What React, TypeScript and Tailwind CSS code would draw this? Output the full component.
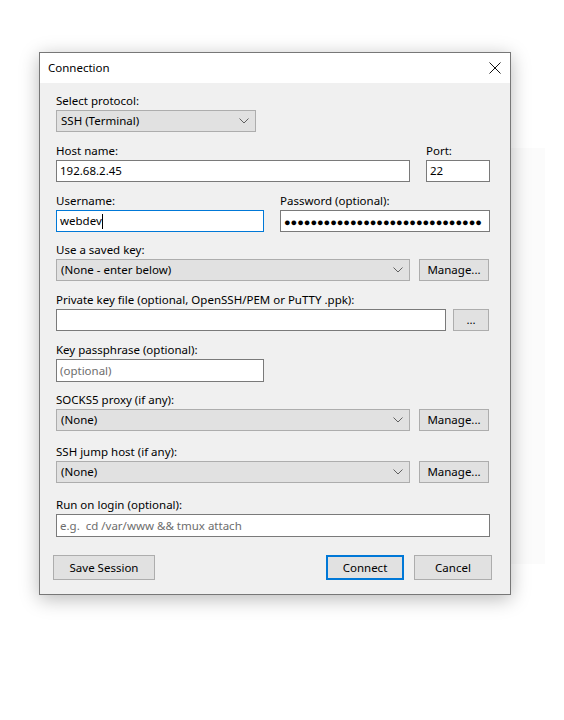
import React from 'react';

const font = { fontFamily: '"Noto Sans", "Liberation Sans", sans-serif' };

const Chevron = () => (
  <svg width="10" height="6" viewBox="0 0 10 6" className="shrink-0">
    <path d="M0.5 0.5 L5 5 L9.5 0.5" fill="none" stroke="#606060" strokeWidth="1" />
  </svg>
);

const Label = ({ children }: { children: React.ReactNode }) => (
  <div className="h-4 leading-4 mb-px text-[11.5px] text-black whitespace-nowrap">{children}</div>
);

const Select = ({ value, className }: { value: string; className: string }) => (
  <div
    className={`h-[22px] flex items-center justify-between pl-[4px] pr-[6px] bg-[#e1e1e1] border border-[#adadad] text-[11.5px] text-black ${className}`}
  >
    <span>{value}</span>
    <Chevron />
  </div>
);

const Input = ({
  value,
  placeholder,
  className,
  focused,
  children,
}: {
  value?: string;
  placeholder?: string;
  className: string;
  focused?: boolean;
  children?: React.ReactNode;
}) => (
  <div
    className={`h-[22px] flex items-center px-[3px] bg-white border text-[11.5px] ${
      focused ? 'border-[#0078d7]' : 'border-[#7a7a7a]'
    } ${className}`}
  >
    {children ?? (value ? (
      <span className="text-black">{value}</span>
    ) : (
      <span className="text-[#6d6d6d]">{placeholder}</span>
    ))}
  </div>
);

const Button = ({
  label,
  className,
  primary,
}: {
  label: string;
  className: string;
  primary?: boolean;
}) => (
  <div
    className={`flex items-center justify-center bg-[#e1e1e1] text-[11.5px] text-black ${
      primary ? 'border-2 border-[#0078d7]' : 'border border-[#adadad]'
    } ${className}`}
  >
    {label}
  </div>
);

export default function App() {
  return (
    <div className="relative w-[564px] h-[720px] bg-white overflow-hidden" style={font}>
      {/* faint window behind */}
      <div className="absolute left-[470px] top-[148px] w-[75px] h-[416px] bg-[#fbfbfb]" />

      <div className="absolute left-[39px] top-[52px] w-[472px] h-[543px] border border-[#777777] bg-[#f0f0f0] shadow-[0_4px_18px_rgba(0,0,0,0.28)] flex flex-col">
        {/* title bar */}
        <div className="h-[30px] bg-white flex items-center justify-between pl-[8px] pr-[9px]">
          <span className="text-[11.5px] text-black">Connection</span>
          <svg width="12" height="12" viewBox="0 0 12 12">
            <path d="M0.5 0.5 L11.5 11.5 M11.5 0.5 L0.5 11.5" stroke="#111" strokeWidth="1" />
          </svg>
        </div>

        <div className="flex-1 pl-[16px] pr-[19px] pt-[10px]">
          {/* protocol */}
          <Label>Select protocol:</Label>
          <Select value="SSH (Terminal)" className="w-[200px]" />

          {/* host / port */}
          <div className="mt-[11px] flex gap-[16px]">
            <div>
              <Label>Host name:</Label>
              <Input value="192.68.2.45" className="w-[354px]" />
            </div>
            <div>
              <Label>Port:</Label>
              <Input value="22" className="w-[64px]" />
            </div>
          </div>

          {/* user / password */}
          <div className="mt-[11px] flex gap-[16px]">
            <div>
              <Label>Username:</Label>
              <Input className="w-[208px]" focused>
                <span className="text-black">webdev</span>
                <span className="inline-block w-px h-[15px] bg-black" />
              </Input>
            </div>
            <div>
              <Label>Password (optional):</Label>
              <Input className="w-[210px] overflow-hidden">
                <span className="text-black text-[11px] tracking-[-0.05px] whitespace-nowrap leading-none">
                  {'●'.repeat(30)}
                </span>
              </Input>
            </div>
          </div>

          {/* saved key */}
          <div className="mt-[10px]">
            <Label>Use a saved key:</Label>
            <div className="flex gap-[9px]">
              <Select value="(None - enter below)" className="w-[354px]" />
              <Button label="Manage..." className="w-[70px] h-[22px]" />
            </div>
          </div>

          {/* private key */}
          <div className="mt-[11px]">
            <Label>Private key file (optional, OpenSSH/PEM or PuTTY .ppk):</Label>
            <div className="flex gap-[7px]">
              <Input className="w-[390px]" />
              <Button label="..." className="w-[36px] h-[22px]" />
            </div>
          </div>

          {/* passphrase */}
          <div className="mt-[11px]">
            <Label>Key passphrase (optional):</Label>
            <Input placeholder="(optional)" className="w-[208px] h-[23px]" />
          </div>

          {/* socks */}
          <div className="mt-[10px]">
            <Label>SOCKS5 proxy (if any):</Label>
            <div className="flex gap-[9px]">
              <Select value="(None)" className="w-[354px]" />
              <Button label="Manage..." className="w-[70px] h-[22px]" />
            </div>
          </div>

          {/* jump host */}
          <div className="mt-[13px]">
            <Label>SSH jump host (if any):</Label>
            <div className="flex gap-[9px]">
              <Select value="(None)" className="w-[354px]" />
              <Button label="Manage..." className="w-[70px] h-[22px]" />
            </div>
          </div>

          {/* run on login */}
          <div className="mt-[14px]">
            <Label>Run on login (optional):</Label>
            <Input placeholder="e.g.  cd /var/www && tmux attach" className="w-[434px] h-[23px] whitespace-pre" />
          </div>

          {/* buttons */}
          <div className="mt-[18px] -ml-[3px] -mr-[1px] flex items-center">
            <Button label="Save Session" className="w-[102px] h-[25px]" />
            <div className="flex-1" />
            <Button label="Connect" className="w-[78px] h-[25px]" primary />
            <Button label="Cancel" className="w-[78px] h-[25px] ml-[10px]" />
          </div>
        </div>
      </div>
    </div>
  );
}
